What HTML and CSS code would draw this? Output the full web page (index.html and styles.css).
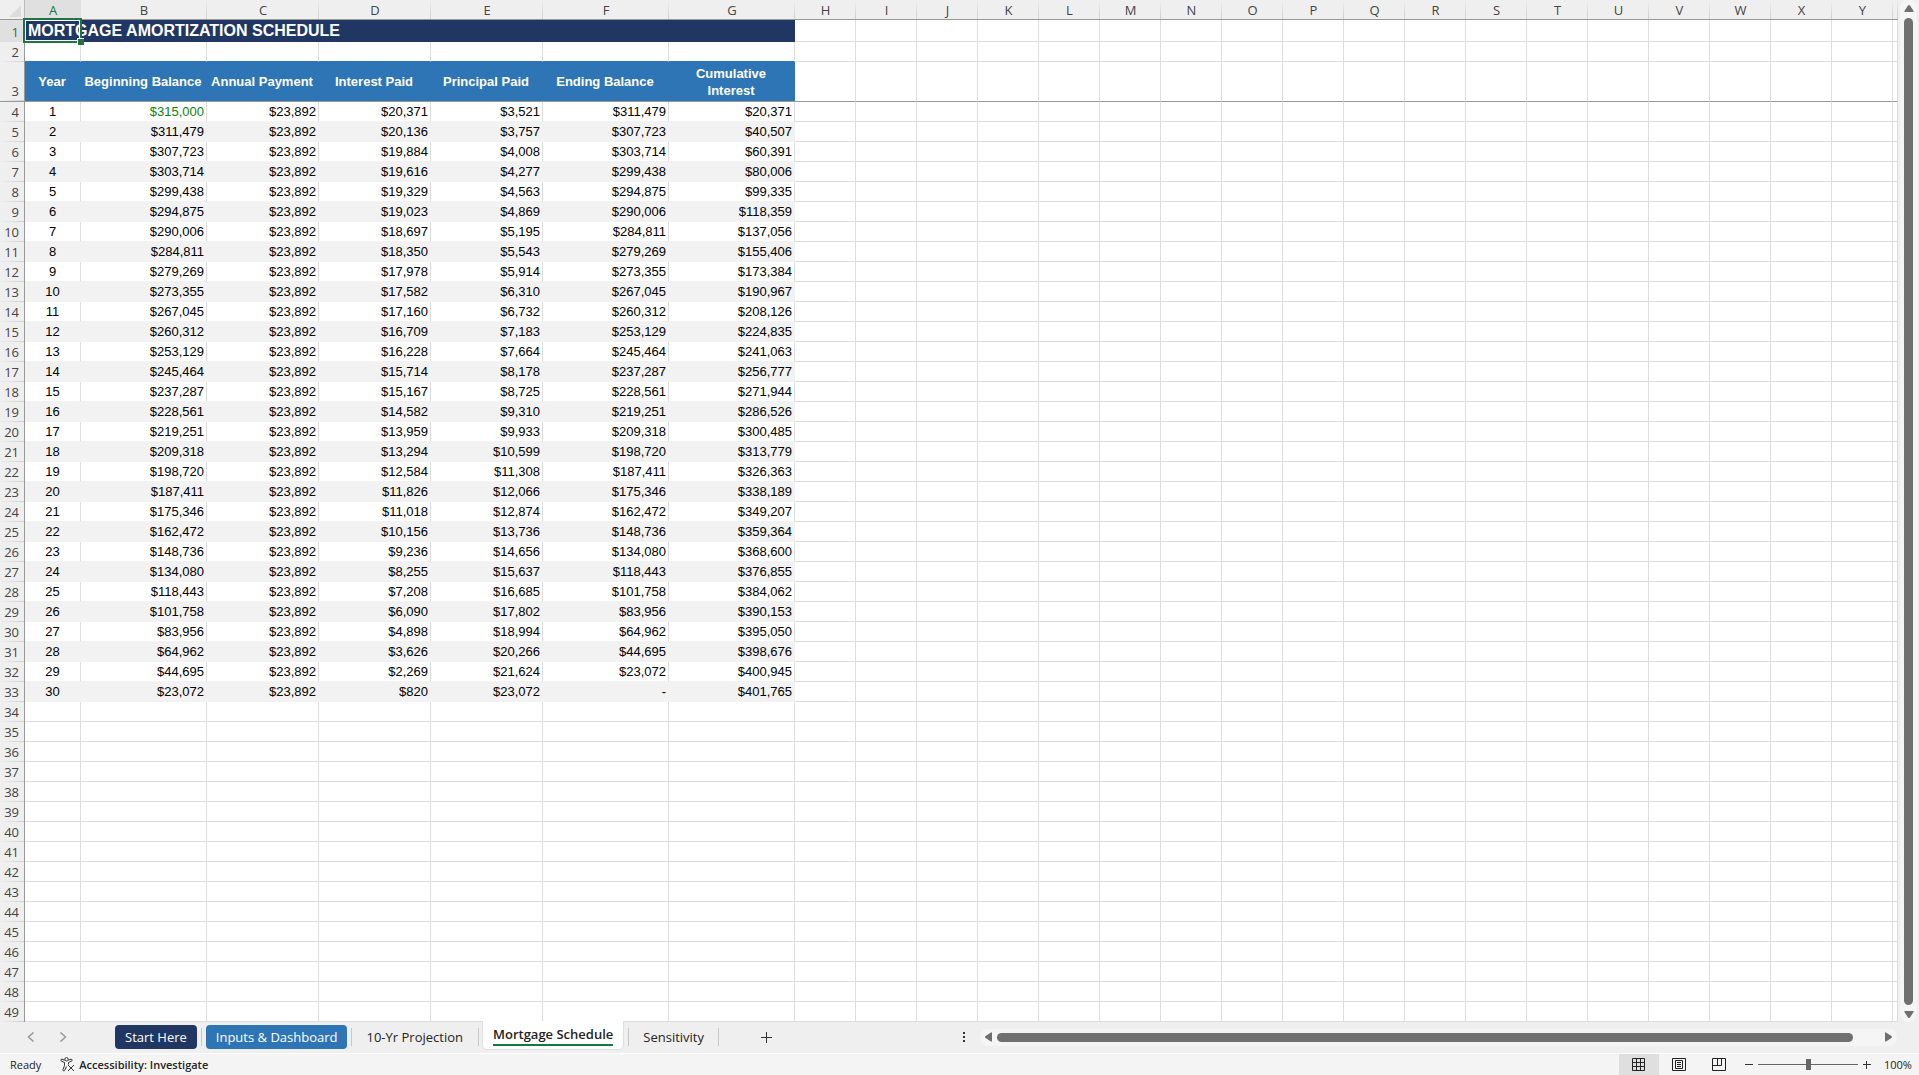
FILE: index.html
```html
<!DOCTYPE html>
<html lang="en">
<head>
<meta charset="utf-8">
<meta name="viewport" content="width=device-width, initial-scale=1">
<title>Mortgage Schedule</title>
<link rel="stylesheet" href="styles.css">
</head>
<body>
<main class="workspace">
  <div class="grid-view">
    <table class="sheet">
      <colgroup id="cols"></colgroup>
      <thead><tr id="letters"></tr></thead>
      <tbody id="rows"></tbody>
    </table>
  </div>
  <div class="vscroll" aria-hidden="true">
    <svg class="arrow-v" viewBox="0 0 10 7"><path d="M5 0Q5.6 0 6 .6L9.6 6Q10 7 9 7H1Q0 7 .4 6L4 .6Q4.400 0 5 0Z"/></svg>
    <span class="vthumb"></span>
    <svg class="arrow-v" viewBox="0 0 10 7"><path d="M5 7Q5.600 7 6 6.400L9.600 1Q10 0 9 0H1Q0 0 .4 1L4 6.400Q4.400 7 5 7Z"/></svg>
  </div>
</main>
<nav class="tabbar" aria-label="Sheets">
  <div class="tab-arrows">
    <button class="plain" aria-label="Previous sheets"><svg width="8" height="10" viewBox="0 0 8 10"><path d="M6.500 .5L1.500 5l5 4.500"/></svg></button>
    <button class="plain" aria-label="Next sheets"><svg width="8" height="10" viewBox="0 0 8 10"><path d="M1.500 .5l5 4.500-5 4.500"/></svg></button>
  </div>
  <div class="tabs">
    <button class="tab navy">Start Here</button>
    <button class="tab blue">Inputs &amp; Dashboard</button>
    <button class="tab">10-Yr Projection</button>
    <button class="tab active"><span>Mortgage Schedule</span></button>
    <button class="tab">Sensitivity</button>
  </div>
  <button class="plain add" aria-label="New sheet"><svg width="11" height="11" viewBox="0 0 11 11"><path d="M5.500 0v11M0 5.500h11"/></svg></button>
  <span class="dots" aria-hidden="true"><i></i><i></i><i></i></span>
  <div class="hscroll" aria-hidden="true">
    <svg class="arrow-h" viewBox="0 0 7 10"><path d="M0 5Q0 4.400.6 4L6 .4Q7 0 7 1V9Q7 10 6 9.600L.6 6Q0 5.600 0 5Z"/></svg>
    <span class="hthumb"></span>
    <svg class="arrow-h" viewBox="0 0 7 10"><path d="M7 5Q7 4.400 6.400 4L1 .4Q0 0 0 1V9Q0 10 1 9.600L6.400 6Q7 5.600 7 5Z"/></svg>
  </div>
</nav>
<footer class="status">
  <span class="ready">Ready</span>
  <button class="plain access">
    <svg width="15" height="15" viewBox="0 0 15 15"><circle cx="6.500" cy="2.300" r="1.700"/><path d="M4.800 3.200L2 2.200Q.8 2.200.8 3.200q0 .7.800 1L4.500 5.500V8.500L3 12.500q-.2 1.300.8 1.400.7 0 1-.8L6.500 9.500M8.200 3.200L11 2.200q1.200 0 1.200 1 0 .7-.8 1L8.500 5.500V7.500M8 8l6 6M14 8l-6 6"/></svg>
    Accessibility: Investigate
  </button>
  <div class="views">
    <button class="view on" aria-label="Normal"><svg width="14" height="14" viewBox="0 0 14 14"><path d="M.5.5h12v12H.5zM4.500.5v12M8.500.5v12M.5 4.500h12M.5 8.500h12"/></svg></button>
    <button class="view" aria-label="Page Layout"><svg width="14" height="14" viewBox="0 0 14 14"><path d="M.5.5h13v12H.5zM3.500 2.500h7v8h-7zM5 4.500h4M5 6.500h4M5 8.500h4"/></svg></button>
    <button class="view" aria-label="Page Break Preview"><svg width="14" height="14" viewBox="0 0 14 14"><path d="M.5.5h13v12H.5zM.5 7.500h9v-7M5.500.5v7"/></svg></button>
  </div>
  <div class="zoom">
    <button class="plain" aria-label="Zoom out"><svg width="8" height="8" viewBox="0 0 8 8"><path d="M0 3.500h8"/></svg></button>
    <input type="range" min="0" max="100" value="50" aria-label="Zoom">
    <button class="plain" aria-label="Zoom in"><svg width="8" height="8" viewBox="0 0 8 8"><path d="M0 3.500h8M3.500 0v8"/></svg></button>
    <span class="pct">100%</span>
  </div>
</footer>
<script src="sheet.js"></script>
</body>
</html>
```
FILE: styles.css
```css
* { box-sizing: border-box; }
html, body { height: 100%; }
body {
  margin: 0;
  display: flex;
  flex-direction: column;
  overflow: hidden;
  background: #efefef;
  color: #242424;
  font-family: "Open Sans", "Noto Sans", sans-serif;
  font-size: 13px;
}
button { font: inherit; color: inherit; border: 0; margin: 0; cursor: pointer; }
svg { display: block; fill: none; stroke: #333; }
.plain { background: none; padding: 0; display: flex; align-items: center; }

/* Grid */
.workspace { flex: 1; min-height: 0; display: flex; }
.grid-view { flex: 1; min-width: 0; overflow: hidden; }
.sheet {
  table-layout: fixed;
  width: 100%;
  border-collapse: separate;
  border-spacing: 0;
  background: #fff;
}
.c-head { width: 25px; }
.c-year { width: 56px; }
.c-wide { width: 126px; }
.c-mid { width: 112px; }
.c-std { width: 61px; }
th, td { padding: 0; height: 20px; line-height: 18px; overflow: hidden; white-space: nowrap; }
thead th {
  font-weight: 400;
  color: #444;
  background: linear-gradient(#efefef, #cfcfcf) right / 1px 100% no-repeat #efefef;
  border-bottom: 1px solid #999;
}
thead .corner { background: #efefef; border-right: 1px solid #bbb; }
.corner svg { margin: 3px 0 0 9px; fill: #dcdcdc; stroke: none; }
thead .sel, tbody .sel { background: #e0e0e0; color: #107c41; }
.num {
  font-weight: 400;
  color: #444;
  text-align: right;
  vertical-align: bottom;
  padding: 0 5px 1px 0;
  background: linear-gradient(90deg, #efefef, #cfcfcf) bottom / 100% 1px no-repeat #efefef;
  border-right: 1px solid #999;
}
td {
  border-right: 1px solid #dedede;
  border-bottom: 1px solid #dedede;
  font: 13px/18px "Liberation Sans", Arial, sans-serif;
  color: #000;
  text-align: right;
}
.r1 > * { height: 22px; }
.r3 > * { height: 40px; border-bottom: 1px solid #999; }
.title {
  position: relative;
  overflow: visible;
  background: #203764;
  border: 0;
  color: #fff;
  font-size: 16px;
  line-height: 22px;
  font-weight: 700;
  text-align: left;
  padding-left: 3px;
}
.cursor {
  position: absolute;
  left: -2px;
  top: -2px;
  width: 59px;
  height: 25px;
  border: 2px solid #217346;
  box-shadow: inset 0 0 0 1px #fff;
}
.cursor::after {
  content: "";
  position: absolute;
  right: -4px;
  bottom: -4px;
  width: 6px;
  height: 6px;
  background: #217346;
  border: 1px solid #fff;
  border-width: 1px 0 0 1px;
}
.r2 .d { border-bottom-color: #2e75b6; }
.r3 .head {
  padding: 0 5px 0 3px;
  background: #2e75b6;
  border-right: 0;
  color: #fff;
  font: 700 13px/17px "Liberation Sans", Arial, sans-serif;
  text-align: center;
  white-space: normal;
}
.data .d { padding-right: 2px; border-bottom-color: #f2f2f2; }
.data .year { text-align: center; padding-right: 0; }
.band .d { background: #f2f2f2; border-right-color: #f2f2f2; }
.data .linked { color: #108010; }

/* Scroll bars */
.vscroll {
  width: 17px;
  margin: 0 2px;
  padding: 5px 0 4px;
  display: flex;
  flex-direction: column;
  align-items: center;
  gap: 6px;
  background: #f5f5f5;
  border-radius: 8px;
}
.vthumb { flex: 1; width: 9px; border-radius: 5px; background: #707070; }
.arrow-v { width: 10px; height: 7px; fill: #707070; stroke: none; }
.arrow-h { width: 7px; height: 10px; fill: #707070; stroke: none; }
.hscroll {
  flex: 0 1 917px;
  height: 17px;
  margin-right: 22px;
  padding: 0 5px;
  display: flex;
  align-items: center;
  gap: 5px;
  background: #f5f5f5;
  border-radius: 8px;
}
.hthumb { flex: 1; height: 9px; margin-right: 27px; border-radius: 5px; background: #707070; }

/* Sheet tabs */
.tabbar {
  height: 31px;
  padding-bottom: 1px;
  flex: none;
  display: flex;
  align-items: center;
  background: #efefef;
}
.tab-arrows { width: 115px; padding-left: 27px; display: flex; gap: 24px; }
.tab-arrows svg { stroke: #999; stroke-width: 1.500; }
.tabs { align-self: stretch; display: flex; align-items: center; }
.tab {
  height: 24px;
  padding: 0 10px;
  border-radius: 4px;
  background: none;
  white-space: nowrap;
  line-height: 24px;
}
.tab + .tab { margin-left: 9px; position: relative; }
.tab + .tab::before, .tab:last-child::after {
  content: "";
  position: absolute;
  left: -5px;
  top: 3px;
  width: 1px;
  height: 18px;
  background: #c8c8c8;
}
.tab:last-child::after { left: auto; right: -5px; }
.navy { background: #203764; color: #fff; }
.blue { background: #2e75b6; color: #fff; }
.active {
  align-self: flex-start;
  height: 29px;
  margin-top: -1px;
  background: #fff;
  border: 1px solid #dedede;
  border-top: 0;
  border-radius: 0 0 5px 5px;
  font-weight: 600;
}
.active span { display: block; height: 22px; line-height: 20px; border-bottom: 2px solid #107c41; }
.tab.active::before { top: 7px; }
.add { margin-left: 47px; }
.dots { margin: 0 15px 0 auto; display: flex; flex-direction: column; gap: 2px; }
.dots i { width: 2px; height: 2px; background: #333; }

/* Status bar */
.status {
  height: 22px;
  flex: none;
  display: flex;
  align-items: center;
  background: #f4f4f4;
  border-top: 1px solid #fff;
  font-size: 11px;
}
.ready { margin-left: 10px; }
.access { margin-left: 19px; gap: 4px; font-weight: 600; }
.views { margin-left: auto; display: flex; align-self: stretch; }
.view { width: 40px; padding: 0; background: none; display: grid; place-items: center; }
.view.on { background: #dfdfdf; }
.view svg { stroke: #222; }
.zoom { display: flex; align-items: center; padding-left: 6px; }
.zoom input {
  appearance: none;
  width: 100px;
  height: 11px;
  margin: 0 5px;
  background: linear-gradient(#666, #666) center / 100% 1px no-repeat;
}
.zoom input::-webkit-slider-thumb { appearance: none; width: 5px; height: 11px; background: #666; }
.pct { width: 48px; padding-left: 13px; }
```
FILE: sheet.js
```js
const heads = ["Year", "Beginning Balance", "Annual Payment", "Interest Paid",
  "Principal Paid", "Ending Balance", "Cumulative Interest"];
const payment = "23,892";
// interest, principal, ending balance, cumulative interest
const years = `20,371 3,521 311,479 20,371
20,136 3,757 307,723 40,507
19,884 4,008 303,714 60,391
19,616 4,277 299,438 80,006
19,329 4,563 294,875 99,335
19,023 4,869 290,006 118,359
18,697 5,195 284,811 137,056
18,350 5,543 279,269 155,406
17,978 5,914 273,355 173,384
17,582 6,310 267,045 190,967
17,160 6,732 260,312 208,126
16,709 7,183 253,129 224,835
16,228 7,664 245,464 241,063
15,714 8,178 237,287 256,777
15,167 8,725 228,561 271,944
14,582 9,310 219,251 286,526
13,959 9,933 209,318 300,485
13,294 10,599 198,720 313,779
12,584 11,308 187,411 326,363
11,826 12,066 175,346 338,189
11,018 12,874 162,472 349,207
10,156 13,736 148,736 359,364
9,236 14,656 134,080 368,600
8,255 15,637 118,443 376,855
7,208 16,685 101,758 384,062
6,090 17,802 83,956 390,153
4,898 18,994 64,962 395,050
3,626 20,266 44,695 398,676
2,269 21,624 23,072 400,945
820 23,072 - 401,765`.split("\n").map(r => r.split(" "));

const colClasses = ["head", "year", "wide", "mid", "mid", "mid", "wide", "wide",
  ...Array(18).fill("std")];
document.getElementById("cols").innerHTML =
  colClasses.map(c => `<col class="c-${c}">`).join("") + "<col>";

const letters = [..."ABCDEFGHIJKLMNOPQRSTUVWXY"];
document.getElementById("letters").innerHTML =
  `<th class="corner"><svg width="12" height="12" viewBox="0 0 12 12"><path d="M12 0v12H0z"/></svg></th>` +
  letters.map((l, i) => `<th scope="col"${i ? "" : ' class="sel"'}>${l}</th>`).join("") + "<th></th>";

const blank = n => "<td></td>".repeat(n);
const money = v => v === "-" ? v : "$" + v;
let opening = "315,000";
let html = "";
for (let n = 1; n <= 49; n++) {
  const y = n - 3;
  let cls = "r" + n, cells;
  if (n === 1) {
    cells = `<td class="title" colspan="7">MORTGAGE AMORTIZATION SCHEDULE<span class="cursor"></span></td>`;
  } else if (n === 2) {
    cells = '<td class="d"></td>'.repeat(7);
  } else if (n === 3) {
    cells = heads.map(h => `<th class="head" scope="col">${h}</th>`).join("");
  } else if (y <= 30) {
    const [interest, principal, ending, total] = years[y - 1];
    cls += y % 2 ? " data" : " data band";
    cells = `<td class="d year">${y}</td>` +
      [opening, payment, interest, principal, ending, total].map((v, i) =>
        `<td class="d${y === 1 && i === 0 ? " linked" : ""}">${money(v)}</td>`).join("");
    opening = ending;
  } else {
    cells = blank(7);
  }
  html += `<tr class="${cls}"><th class="num${n === 1 ? " sel" : ""}" scope="row">${n}</th>${cells}${blank(19)}</tr>`;
}
document.getElementById("rows").innerHTML = html;
```
